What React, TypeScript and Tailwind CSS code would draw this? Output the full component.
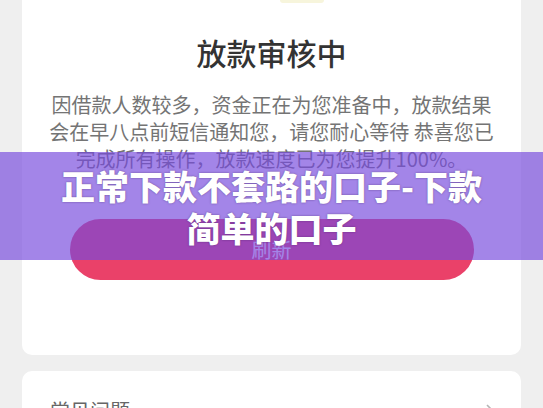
import React from "react";

export default function App() {
  const font = { fontFamily: '"Noto Sans CJK SC", "Noto Sans", sans-serif' };
  return (
    <div
      className="relative w-[543px] h-[408px] overflow-hidden bg-[#efefef] px-[22px]"
      style={font}
    >
      <div className="flex flex-col items-center rounded-b-[10px] bg-white pb-[75px]">
        <div className="h-[3px] w-[44px] rounded-b-full bg-[#f7f5dc] ml-[60px]" />
        <h1 className="mt-[29px] text-[30px] leading-[40px] font-medium text-[#333333]">
          放款审核中
        </h1>
        <p className="mt-[19px] text-center text-[20px] leading-[27px] text-[#747474]">
          因借款人数较多，资金正在为您准备中，放款结果
          <br />
          会在早八点前短信通知您，请您耐心等待 恭喜您已
          <br />
          完成所有操作，放款速度已为您提升100%。
        </p>
        <button className="mt-[47px] flex h-[61px] w-[404px] items-center justify-center rounded-full bg-[#ea4169] text-[20px] text-white">
          刷新
        </button>
      </div>
      <div className="mt-[16px] flex items-start justify-between rounded-[10px] bg-white pl-[28px] pr-[26px] pt-[26px] h-[80px]">
        <span className="text-[20px] leading-[28px] text-[#666666]">常见问题</span>
        <svg width="10" height="16" viewBox="0 0 10 16" className="mt-[6px]">
          <path d="M2 2 L8 8 L2 14" fill="none" stroke="#b5b5b5" strokeWidth="1.6" />
        </svg>
      </div>
      <div className="absolute left-0 top-[152px] h-[108px] w-[543px] bg-[rgba(118,73,221,0.67)] pt-[13px] text-center">
        <div className="text-[34px] leading-[42px] font-black text-white [text-shadow:0_0_2px_rgba(60,30,90,0.6)]">
          正常下款不套路的口子-下款
          <br />
          简单的口子
        </div>
      </div>
    </div>
  );
}
